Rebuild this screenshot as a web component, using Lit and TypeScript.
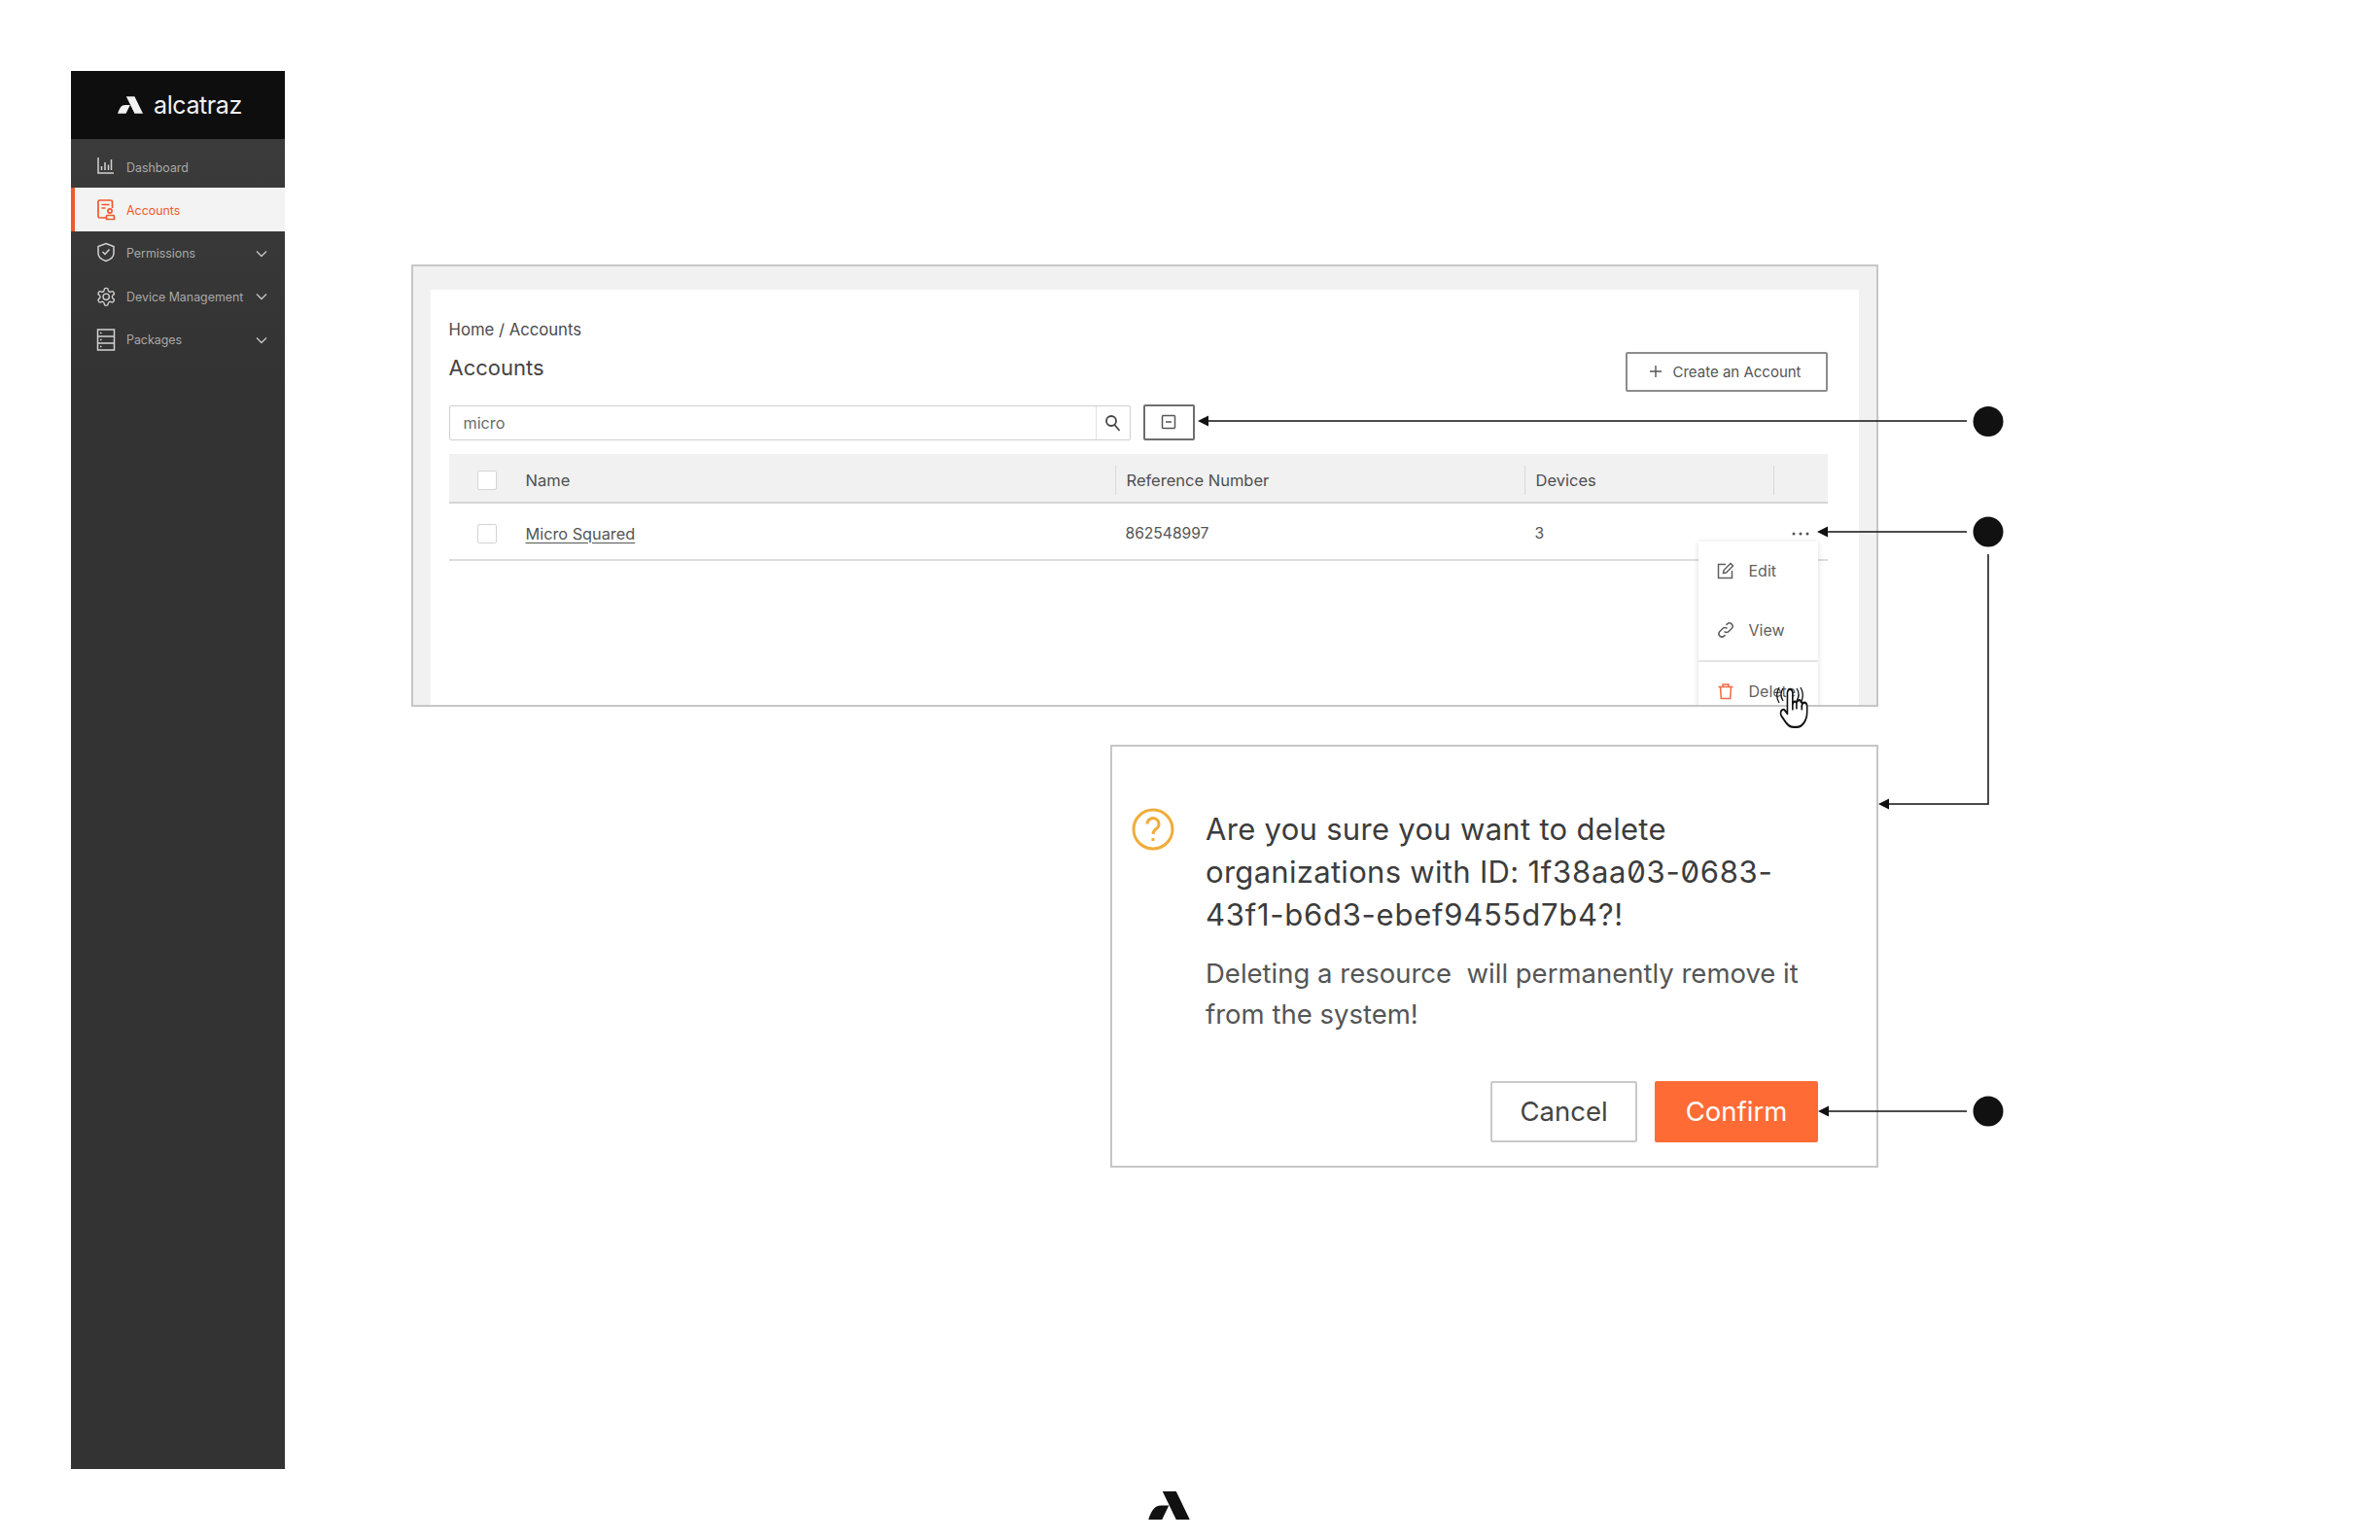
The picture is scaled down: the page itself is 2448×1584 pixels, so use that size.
import { LitElement, html, css, svg } from "lit";
import { customElement } from "lit/decorators.js";

const navIcons: Record<string, any> = {
  dash: svg`<path d="M2 1v16h16M5.500 14v-4M9 14V6M12.500 14V8.500M15.500 14V3"/>`,
  acct: svg`<path d="M10 19H3.500a1.500 1.500 0 0 1-1.500-1.500V2.500A1.500 1.500 0 0 1 3.500 1H15a1.500 1.500 0 0 1 1.500 1.500v6.500M5.500 5.500h8M5.500 9h4"/><circle cx="14" cy="12" r="2.100"/><path d="M10.500 20.500v-3a1 1 0 0 1 1-1h6a1 1 0 0 1 1 1v3z"/>`,
  shield: svg`<path d="M10 1.500l8 3v7c0 4-3.500 6.500-8 8-4.500-1.500-8-4-8-8v-7z"/><path d="M6.500 10l2.500 2.500 4.500-5"/>`,
  gear: svg`<g transform="translate(-.6 .5) scale(.9)"><path d="M12.220 2h-.44a2 2 0 0 0-2 2v.18a2 2 0 0 1-1 1.730l-.43.25a2 2 0 0 1-2 0l-.15-.08a2 2 0 0 0-2.730.73l-.22.38a2 2 0 0 0 .73 2.730l.15.1a2 2 0 0 1 1 1.720v.51a2 2 0 0 1-1 1.740l-.15.09a2 2 0 0 0-.73 2.730l.22.38a2 2 0 0 0 2.730.73l.15-.08a2 2 0 0 1 2 0l.43.25a2 2 0 0 1 1 1.730V20a2 2 0 0 0 2 2h.44a2 2 0 0 0 2-2v-.18a2 2 0 0 1 1-1.730l.43-.25a2 2 0 0 1 2 0l.15.08a2 2 0 0 0 2.730-.73l.22-.39a2 2 0 0 0-.73-2.730l-.15-.08a2 2 0 0 1-1-1.740v-.5a2 2 0 0 1 1-1.740l.15-.09a2 2 0 0 0 .73-2.730l-.22-.38a2 2 0 0 0-2.730-.73l-.15.08a2 2 0 0 1-2 0l-.43-.25a2 2 0 0 1-1-1.730V4a2 2 0 0 0-2-2z"/><circle cx="12" cy="12" r="3.500"/></g>`,
  pack: svg`<rect x="1.500" y="1" width="17" height="21"/><path d="M1.500 8h17M1.500 15h17M4 4.500h1.500M4 11.500h1.500M4 18.500h1.500"/>`,
};

const nav = [
  { key: "dash", label: "Dashboard", chev: false, active: false },
  { key: "acct", label: "Accounts", chev: false, active: true },
  { key: "shield", label: "Permissions", chev: true, active: false },
  { key: "gear", label: "Device Management", chev: true, active: false },
  { key: "pack", label: "Packages", chev: true, active: false },
];

@customElement("app-root")
export class AppRoot extends LitElement {
  static styles = css`
    :host {
      display: block;
      position: relative;
      width: 2448px;
      height: 1584px;
      background: #fff;
      overflow: hidden;
      font-family: Inter, "Noto Sans", sans-serif;
      color: #4a4a4a;
    }
    .page { display: flex; padding: 73px 0 0 73px; }
    .sidebar { width: 220px; height: 1438px; background: linear-gradient(#3b3b3b 70px, #333 320px); display: flex; flex-direction: column; flex: none; }
    .brand { height: 70px; background: #0e0e0e; display: flex; align-items: center; gap: 11px; padding-left: 48px; margin-bottom: 6px; color: #f2f2f2; font-size: 25px; letter-spacing: -0.4px; }
    .brand svg { width: 26px; height: 18px; fill: #f2f2f2; }
    .nav { height: 44.400px; box-sizing: border-box; padding: 2px 0 0 26px; display: flex; align-items: center; color: #a9a9a9; font-size: 12.400px; position: relative; }
    .nav.active { background: #f3f3f3; color: #f0592a; border-left: 4px solid #f0592a; padding-left: 22px; }
    .nav .ic { width: 20px; height: 23px; fill: none; stroke: #d2d2d2; stroke-width: 1.500; margin-right: 11px; flex: none; }
    .nav.active .ic { stroke: #f0592a; stroke-width: 1.700; }
    .nav .chev { position: absolute; left: 190px; width: 12px; height: 8px; fill: none; stroke: #c4c4c4; stroke-width: 1.400; }
    .canvas { display: flex; flex-direction: column; margin-left: 130px; padding-top: 199px; }
    .panel { width: 1509px; height: 454.500px; box-sizing: border-box; border: 2.500px solid #c6c6c6; background: #f1f1f1; padding: 23.500px 18.500px 0 17.500px; }
    .inner { height: 100%; background: #fff; position: relative; overflow: hidden; padding: 30px 32px 0 19px; box-sizing: border-box; }
    .top { display: flex; justify-content: space-between; align-items: flex-start; height: 75px; margin-bottom: 14px; }
    .crumb { font-size: 16.700px; line-height: 22px; color: #4a4a4a; }
    .title { font-size: 22px; line-height: 30px; margin-top: 13px; color: #444; }
    .create { align-self: flex-end; width: 208px; height: 41px; box-sizing: border-box; border: 2px solid #8c8c8c; border-radius: 2px; display: flex; align-items: center; font-size: 15px; color: #555; padding-left: 22px; gap: 11px; }
    .create svg { width: 14px; height: 14px; stroke: #555; stroke-width: 1.400; fill: none; }
    .tools { display: flex; gap: 13px; height: 36px; margin-bottom: 14px; }
    .search { width: 701px; box-sizing: border-box; border: 1.500px solid #cfcfcf; border-radius: 2px; display: flex; align-items: center; }
    .search span { flex: 1; padding-left: 14px; font-size: 16.200px; color: #6a6a6a; }
    .search div { width: 34px; height: 100%; border-left: 1.500px solid #e2e2e2; display: flex; align-items: center; justify-content: center; }
    .search svg { width: 17px; height: 18px; stroke: #444; stroke-width: 1.800; fill: none; }
    .filter { width: 53px; height: 37px; box-sizing: border-box; margin-top: -1px; border: 2px solid #6e6e6e; border-radius: 2px; display: flex; align-items: center; justify-content: center; }
    .filter svg { width: 16px; height: 16px; stroke: #555; stroke-width: 1.500; fill: none; }
    .row { display: grid; grid-template-columns: 685px 421px 256px 54px; align-items: center; font-size: 15.600px; color: #555; }
    .head { height: 51px; padding-top: 6px; background: #f1f1f1; border-bottom: 2px solid #d6d6d6; box-sizing: border-box; font-size: 16.500px; color: #4f4f4f; }
    .body { height: 59px; padding-top: 5px; border-bottom: 2px solid #dcdcdc; box-sizing: border-box; }
    .cell { display: flex; align-items: center; height: 30px; padding-left: 11px; }
    .cell.first { padding-left: 29px; }
    .head .cell + .cell { border-left: 1.500px solid #d9d9d9; }
    .check { width: 20px; height: 20px; box-sizing: border-box; border: 1.500px solid #d4d4d4; border-radius: 2px; background: #fff; margin-right: 30px; }
    .link { text-decoration: underline; text-underline-offset: 3px; font-size: 16.300px; }
    .dots { width: 18px; height: 4px; fill: #555; margin-left: 8px; }
    .menu { position: absolute; left: 1304px; top: 259px; width: 123px; background: #fff; box-shadow: 0 1px 6px rgba(0, 0, 0, 0.14); font-size: 16px; color: #5f5f5f; }
    .item { height: 61px; display: flex; align-items: center; padding-left: 19px; gap: 15px; }
    .item svg { width: 18px; height: 18px; fill: none; stroke: currentColor; stroke-width: 1.500; flex: none; }
    .item.sep { border-top: 2px solid #e4e4e4; }
    .item .del { color: #ee6a45; }
    .dialog { width: 790px; height: 434.500px; box-sizing: border-box; margin: 39.500px 0 0 719px; border: 2.500px solid #c6c6c6; display: flex; flex-direction: column; padding: 63px 60px 0 20px; }
    .msg { display: flex; gap: 32px; }
    .q { width: 44px; height: 44px; flex: none; fill: none; stroke: #f0ad3a; stroke-width: 3; }
    .h { font-size: 31px; line-height: 44px; letter-spacing: 0.3px; color: #3c3c3c; font-feature-settings: "zero" 1; white-space: nowrap; }
    .id { letter-spacing: 0.750px; }
    .p { margin-top: 17px; font-size: 27.500px; line-height: 42px; color: #555; white-space: pre; }
    .btns { display: flex; justify-content: flex-end; gap: 18px; margin-top: 47.500px; }
    .btn { height: 63px; box-sizing: border-box; display: flex; align-items: center; justify-content: center; font-size: 27.500px; border-radius: 2px; }
    .cancel { width: 151px; border: 2px solid #c9c9c9; color: #444; }
    .confirm { width: 168px; background: #ff6b35; color: #fff; }
    .mark { width: 43px; height: 29px; fill: #111; margin: 333px 0 0 758px; }
    .over { position: absolute; left: 0; top: 0; width: 2448px; height: 1584px; pointer-events: none; }
  `;

  render() {
    return html`
      <div class="page">
        <aside class="sidebar">
          <div class="brand">
            <svg viewBox="0 0 42.500 29"><path d="M14.500 0H28.500L42.500 29H28.500ZM0 29C3 20 6 14.500 13 14.500H21L14 29Z"/></svg>
            <span>alcatraz</span>
          </div>
          ${nav.map(
            (n) => html`<div class="nav ${n.active ? "active" : ""}">
              <svg class="ic" viewBox="0 0 20 23">${navIcons[n.key]}</svg>
              <span>${n.label}</span>
              ${n.chev ? html`<svg class="chev" viewBox="0 0 12 8"><path d="M1 1.500l5 5 5-5"/></svg>` : ""}
            </div>`
          )}
        </aside>
        <main class="canvas">
          <section class="panel">
            <div class="inner">
              <div class="top">
                <div>
                  <div class="crumb">Home / Accounts</div>
                  <div class="title">Accounts</div>
                </div>
                <div class="create">
                  <svg viewBox="0 0 14 14"><path d="M7 1v12M1 7h12"/></svg>
                  <span>Create an Account</span>
                </div>
              </div>
              <div class="tools">
                <div class="search">
                  <span>micro</span>
                  <div><svg viewBox="0 0 17 18"><circle cx="7" cy="7" r="5"/><path d="M10.500 11l5 6"/></svg></div>
                </div>
                <div class="filter"><svg viewBox="0 0 16 16"><rect x="1.500" y="1.500" width="13" height="13" rx="1"/><path d="M5 8h6"/></svg></div>
              </div>
              <div class="row head">
                <div class="cell first"><span class="check"></span>Name</div>
                <div class="cell">Reference Number</div>
                <div class="cell">Devices</div>
                <div class="cell"></div>
              </div>
              <div class="row body">
                <div class="cell first"><span class="check"></span><span class="link">Micro Squared</span></div>
                <div class="cell">862548997</div>
                <div class="cell">3</div>
                <div class="cell"><svg class="dots" viewBox="0 0 18 4"><circle cx="2" cy="2" r="1.500"/><circle cx="9" cy="2" r="1.500"/><circle cx="16" cy="2" r="1.500"/></svg></div>
              </div>
              <div class="menu">
                <div class="item">
                  <svg viewBox="0 0 18 18"><path d="M9 2.500H1.500v14h14V9"/><path d="M6.500 11.500l.5-3L14 1.500l2.500 2.500-7 7z"/></svg>
                  <span>Edit</span>
                </div>
                <div class="item">
                  <svg viewBox="0 0 18 18"><path d="M7.500 10.500a3.200 3.200 0 0 0 4.600 0l3-3a3.200 3.200 0 0 0-4.600-4.600l-1 1"/><path d="M10.500 7.500a3.200 3.200 0 0 0-4.600 0l-3 3a3.200 3.200 0 0 0 4.600 4.600l1-1"/></svg>
                  <span>View</span>
                </div>
                <div class="item sep">
                  <svg class="del" viewBox="0 0 18 18"><path d="M1.500 4.500h15M6 4.500V2h6v2.500M3.500 4.500l.8 12h9.400l.8-12"/></svg>
                  <span>Delete</span>
                </div>
              </div>
            </div>
          </section>
          <section class="dialog">
            <div class="msg">
              <svg class="q" viewBox="0 0 44 44"><circle cx="22" cy="22" r="20"/><path d="M16 16.500a6 6 0 1 1 9.300 5c-2.200 1.400-3.300 2.700-3.300 5.500"/><path d="M22 31v3"/></svg>
              <div>
                <div class="h">Are you sure you want to delete<br />organizations with ID: <span class="id">1f38aa03-0683-</span><br /><span class="id">43f1-b6d3-ebef9455d7b4?!</span></div>
                <div class="p">Deleting a resource  will permanently remove it<br />from the system!</div>
              </div>
            </div>
            <div class="btns">
              <div class="btn cancel">Cancel</div>
              <div class="btn confirm">Confirm</div>
            </div>
          </section>
          <svg class="mark" viewBox="0 0 42.500 29"><path d="M14.500 0H28.500L42.500 29H28.500ZM0 29C3 20 6 14.500 13 14.500H21L14 29Z"/></svg>
        </main>
      </div>
      <svg class="over" viewBox="0 0 2448 1584">
        <g fill="#111">
          <circle cx="2045" cy="433.500" r="15.500"/>
          <circle cx="2045" cy="547" r="15.500"/>
          <circle cx="2045" cy="1143" r="15.500"/>
          <path d="M1232 433l11-5.500v11z"/>
          <path d="M1869 547l11-5.500v11z"/>
          <path d="M1932 827l11-5.500v11z"/>
          <path d="M1870 1143l11-5.500v11z"/>
        </g>
        <g fill="none" stroke="#111" stroke-width="1.500">
          <path d="M1240 433H2023"/>
          <path d="M1878 547H2023"/>
          <path d="M2045 570V827H1940"/>
          <path d="M1878 1143H2023"/>
        </g>
        <g transform="translate(1829 705) scale(1.350 1.950)" fill="#fff" stroke="#111" stroke-width="1.200" stroke-linecap="round" stroke-linejoin="round">
          <path d="M18 11a2 2 0 1 1 4 0v3a8 8 0 0 1-8 8h-2c-2.800 0-4.500-.86-5.990-2.340l-3.600-3.600a2 2 0 0 1 2.830-2.820L7 15V4a2 2 0 0 1 4 0v5.500a2 2 0 0 1 3-.5a2 2 0 0 1 4 2z"/>
          <path d="M11 9.500v3M14 9v3M18 11v1.500" fill="none"/>
        </g>
        <g fill="none" stroke="#111" stroke-width="1.300">
          <path d="M1834 708a12 12 0 0 0 0 13M1830 707a16 16 0 0 0 0 16M1848 708a12 12 0 0 1 0 13M1852 707a16 16 0 0 1 0 16"/>
        </g>
      </svg>
    `;
  }
}
